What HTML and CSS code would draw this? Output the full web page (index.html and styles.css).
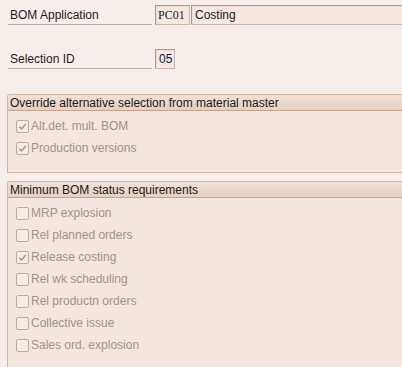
FILE: index.html
```html
<!DOCTYPE html>
<html>
<head>
<meta charset="utf-8">
<link rel="stylesheet" href="styles.css">
</head>
<body>
<div class="page">
  <div class="field-row first">
    <div class="label">BOM Application</div>
    <div class="box code">PC01</div>
    <div class="box wide">Costing</div>
  </div>
  <div class="field-row second">
    <div class="label">Selection ID</div>
    <div class="box small">05</div>
  </div>

  <div class="group g1">
    <div class="group-head">Override alternative selection from material master</div>
    <div class="group-body">
      <div class="cb-row"><span class="cb checked"><svg viewBox="0 0 12 12"><path d="M2.5 6.2 L5 8.6 L9.6 3.2" /></svg></span><span class="cb-text">Alt.det. mult. BOM</span></div>
      <div class="cb-row"><span class="cb checked"><svg viewBox="0 0 12 12"><path d="M2.5 6.2 L5 8.6 L9.6 3.2" /></svg></span><span class="cb-text">Production versions</span></div>
    </div>
  </div>

  <div class="group g2">
    <div class="group-head">Minimum BOM status requirements</div>
    <div class="group-body">
      <div class="cb-row"><span class="cb"></span><span class="cb-text">MRP explosion</span></div>
      <div class="cb-row"><span class="cb"></span><span class="cb-text">Rel planned orders</span></div>
      <div class="cb-row"><span class="cb checked"><svg viewBox="0 0 12 12"><path d="M2.5 6.2 L5 8.6 L9.6 3.2" /></svg></span><span class="cb-text">Release costing</span></div>
      <div class="cb-row"><span class="cb"></span><span class="cb-text">Rel wk scheduling</span></div>
      <div class="cb-row"><span class="cb"></span><span class="cb-text">Rel productn orders</span></div>
      <div class="cb-row"><span class="cb"></span><span class="cb-text">Collective issue</span></div>
      <div class="cb-row"><span class="cb"></span><span class="cb-text">Sales ord. explosion</span></div>
    </div>
  </div>
</div>
</body>
</html>
```
FILE: styles.css
```css
html, body {
  margin: 0;
  padding: 0;
  background: #f6eeeb;
  overflow: hidden;
}
.page {
  width: 402px;
  height: 367px;
  font-family: "Liberation Sans", Arial, sans-serif;
  font-size: 12px;
  color: #1c1c1c;
  overflow: hidden;
}
.field-row {
  display: flex;
  align-items: stretch;
  height: 20px;
  margin-left: 8px;
}
.field-row.first {
  margin-top: 5px;
}
.field-row.second {
  margin-top: 24px;
}
.label {
  width: 144px;
  margin-right: 3px;
  border-bottom: 1px solid #b8aca6;
  box-sizing: border-box;
  padding-left: 2px;
  padding-top: 3px;
  line-height: 15px;
}
.box {
  box-sizing: border-box;
  border: 1px solid #c6b8b0;
  border-top-color: #a89a92;
  border-left-color: #a89a92;
  background: #f5e8e0;
  line-height: 18px;
  padding-left: 3px;
  box-shadow: inset 1px 1px 0 #e8dcd4;
}
.box.code {
  width: 35px;
  font-family: "Liberation Serif", "Times New Roman", serif;
  font-size: 12px;
  color: #101840;
  padding-left: 2px;
}
.box.wide {
  flex: 1;
  margin-left: 1px;
  margin-right: -10px;
}
.box.small {
  width: 20px;
  padding-left: 3px;
  color: #101840;
}
.group {
  margin-left: 7px;
  margin-right: -10px;
  background: #f3e6de;
  border: 1px solid #d4b49e;
  border-right: none;
  border-radius: 3px 0 0 0;
}
.g1 {
  margin-top: 25px;
  height: 79px;
  box-sizing: border-box;
}
.g2 {
  margin-top: 8px;
  height: 200px;
  border-bottom: none;
}
.group-head {
  height: 15px;
  line-height: 16px;
  padding-left: 2px;
  background: linear-gradient(#efe2d8, #e6d0c0);
  border-bottom: 1px solid #c9a288;
  border-radius: 3px 0 0 0;
  color: #1a1a1a;
}
.group-body {
  padding-top: 4px;
}
.cb-row {
  display: flex;
  align-items: center;
  height: 22px;
  padding-left: 8px;
}
.cb {
  width: 13px;
  height: 13px;
  box-sizing: border-box;
  border: 1px solid #bcaaa0;
  border-radius: 2px;
  background: #f6ece6;
  margin-right: 2px;
  display: flex;
  align-items: center;
  justify-content: center;
}
.cb svg {
  width: 11px;
  height: 11px;
}
.cb svg path {
  fill: none;
  stroke: #a8968c;
  stroke-width: 1.6;
}
.cb-text {
  color: #a0928a;
}
```
